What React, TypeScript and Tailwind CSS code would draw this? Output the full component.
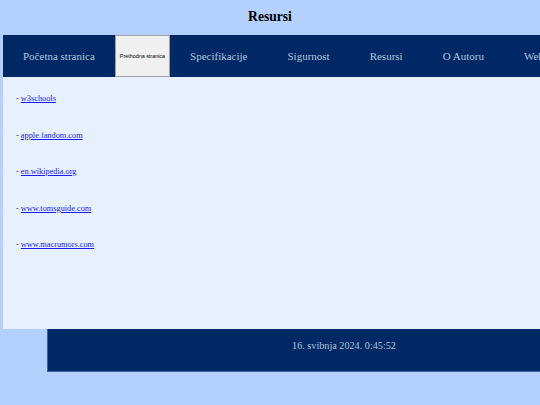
import React from 'react';

const navLinks = ['Specifikacije', 'Sigurnost', 'Resursi', 'O Autoru', 'Web'];

const resources = [
  'w3schools',
  'apple.fandom.com',
  'en.wikipedia.org',
  'www.tomsguide.com',
  'www.macrumors.com',
];

export default function App() {
  return (
    <div className="h-[405px] w-full overflow-hidden bg-[#b3d0ff] font-['Liberation_Serif',serif]">
      <header className="h-[34.5px] flex items-center justify-center">
        <h1 className="text-[13.6px] font-bold text-black leading-none">Resursi</h1>
      </header>

      <nav className="ml-[3px] w-[720px] h-[42.5px] bg-[#002966] flex items-stretch text-[11px] text-[#b3c4df]">
        <a className="px-5 flex items-center whitespace-nowrap">Početna stranica</a>
        <button className="px-[4px] bg-[#f0f0f0] border border-[#a0a0a0] text-black text-[5.4px] font-['Liberation_Sans',sans-serif] whitespace-nowrap">
          Prethodna stranica
        </button>
        {navLinks.map((l) => (
          <a key={l} className="px-5 flex items-center whitespace-nowrap">
            {l}
          </a>
        ))}
      </nav>

      <main className="ml-[3px] w-[620px] h-[252px] bg-[#e6f0ff] pt-[17px] pl-[13px] flex flex-col gap-[26.5px] text-[8.3px] leading-[10px]">
        {resources.map((r) => (
          <p key={r} className="text-[#333]">
            -{' '}
            <a className="text-[#1a1aee] underline">{r}</a>
          </p>
        ))}
      </main>

      <footer className="ml-[47px] w-[594px] h-[43px] bg-[#002966] border border-[#3d64a0] border-t-0 flex items-center justify-center text-[10.2px] text-[#b3c4df] pb-[9px]">
        16. svibnja 2024. 0:45:52
      </footer>
    </div>
  );
}
